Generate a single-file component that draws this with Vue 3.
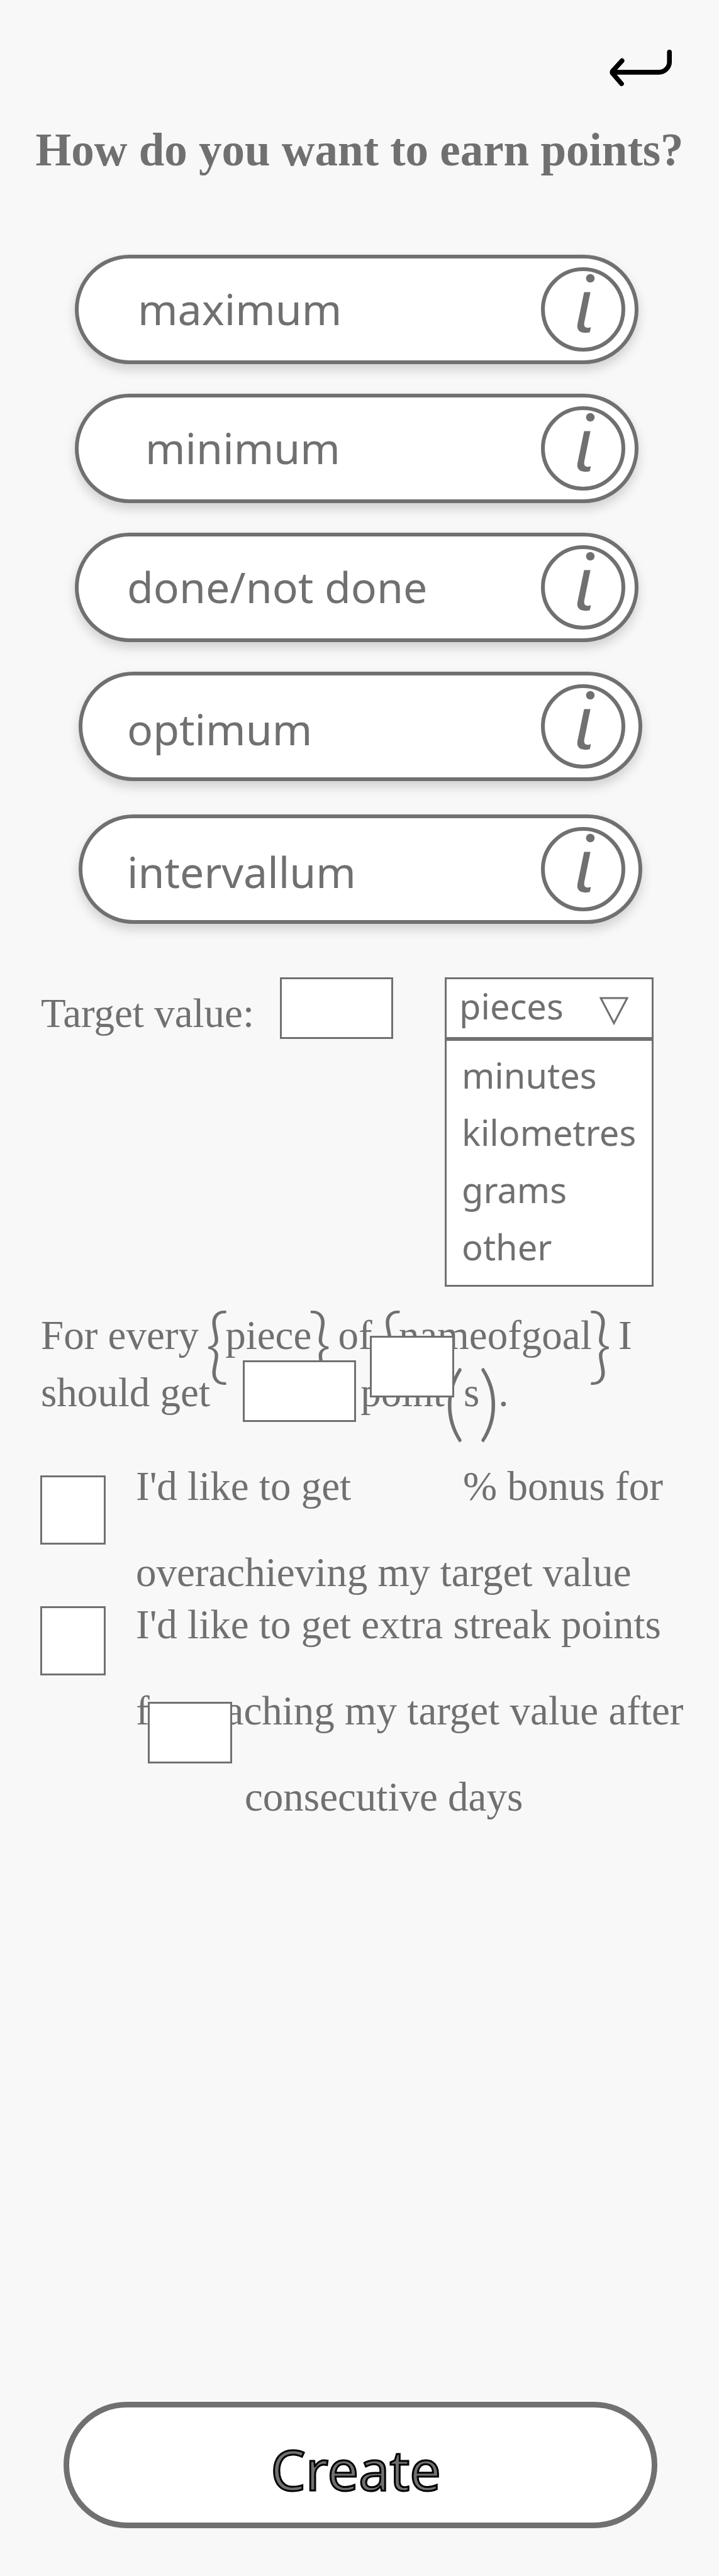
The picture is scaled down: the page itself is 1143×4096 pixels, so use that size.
<script setup>
import { ref } from 'vue'

const modes = [
  { name: 'maximum', tone: 'indent' },
  { name: 'minimum', tone: 'indent-more' },
  { name: 'done/not done', tone: '' },
  { name: 'optimum', tone: 'shifted' },
  { name: 'intervallum', tone: 'shifted' },
]
const otherUnits = ['minutes', 'kilometres', 'grams', 'other']

const target = ref('')
const unit = ref('pieces')
const points = ref('')
const bonus = ref('')
const days = ref('')
const wantsBonus = ref(false)
const wantsStreak = ref(false)
</script>

<template>
  <main class="page">
    <header class="top">
      <button class="back" type="button" aria-label="Back">
        <svg viewBox="0 0 130 76" aria-hidden="true">
          <path d="M125 5V24A22 22 0 0 1 103 47H6M26 23L6 45Q5 47 6 49L25 71" />
        </svg>
      </button>
      <h1>How do you want to earn points?</h1>
    </header>

    <section class="modes">
      <div v-for="mode in modes" :key="mode.name" class="pill" :class="mode.tone">
        <button class="mode" type="button">{{ mode.name }}</button>
        <button class="info" type="button" :aria-label="'About ' + mode.name">
          <svg viewBox="0 0 176 176" aria-hidden="true">
            <circle class="ring" cx="88" cy="88" r="84" />
            <circle cx="103" cy="23" r="9" />
            <path d="M90 52H103.300L90.300 116C89 126 95 128 104.300 125L102 135.500C88 139 74 136 76 120Z" />
          </svg>
        </button>
      </div>
    </section>

    <section class="target">
      <label for="target">Target value:</label>
      <input id="target" v-model="target" class="box" type="text" />
      <div class="units">
        <div class="head">
          <select v-model="unit" aria-label="Unit">
            <option>pieces</option>
            <option v-for="u in otherUnits" :key="u">{{ u }}</option>
          </select>
          <svg viewBox="0 0 46 46" aria-hidden="true"><path d="M2 2H44L23 42Z" /></svg>
        </div>
        <ul role="listbox" aria-label="Units">
          <li v-for="u in otherUnits" :key="u" role="option">{{ u }}</li>
        </ul>
      </div>
    </section>

    <section class="sentence">
      <span class="line">For every <span class="tall">{</span>piece<span class="tall">}</span> of <span class="tall">{</span>nameofgoal<span class="tall">}</span> I</span>
      <span class="line">should get <input v-model="points" class="box inline" type="text" aria-label="Points" />point<span class="tall paren">(</span>s<span class="tall paren">)</span>.</span>
      <input v-model="bonus" class="box small bonus" type="text" aria-label="Bonus percentage" />
    </section>

    <section class="extras">
      <div class="extra">
        <input id="want-bonus" v-model="wantsBonus" type="checkbox" />
        <label for="want-bonus">
          <span class="line">I'd like to get<span class="blank"></span>% bonus for</span>
          <span class="line">overachieving my target value</span>
        </label>
      </div>
      <div class="extra streak">
        <input id="want-streak" v-model="wantsStreak" type="checkbox" />
        <label for="want-streak">
          <span class="line">I'd like to get extra streak points</span>
          <span class="line">for reaching my target value after</span>
          <span class="line last">consecutive days</span>
        </label>
        <input v-model="days" class="box small days" type="text" aria-label="Consecutive days" />
      </div>
    </section>

    <button class="create" type="button">Create</button>
  </main>
</template>

<style>
body {
  margin: 0;
  background: #f8f8f8;
}
</style>

<style scoped>
.page {
  display: flex;
  flex-direction: column;
  box-sizing: border-box;
  min-height: 100vh;
  padding-bottom: 76px;
  overflow: hidden;
  background: #f8f8f8;
  color: #707070;
  font-family: "Liberation Serif", serif;
  font-size: 65px;
}

button,
input,
select {
  box-sizing: border-box;
  margin: 0;
  padding: 0;
  border: 0;
  border-radius: 0;
  background: none;
  color: inherit;
  font: inherit;
  appearance: none;
}

.top {
  display: flex;
  flex-direction: column;
  padding-top: 79px;
}

.back {
  align-self: flex-end;
  width: 99px;
  height: 58px;
  margin-right: 75px;
}

.back svg {
  display: block;
  width: 100%;
  height: 100%;
  fill: none;
  stroke: #000;
  stroke-width: 10;
  stroke-linecap: round;
  stroke-linejoin: round;
}

h1 {
  margin: 60px 0 124px;
  font-size: 73px;
  font-weight: bold;
  line-height: 84px;
  text-align: center;
  white-space: nowrap;
}

.modes {
  display: flex;
  flex-direction: column;
  gap: 47px;
  padding: 0 128px 0 119px;
  font-family: "Noto Sans", "Open Sans", sans-serif;
  font-size: 68px;
}

.pill {
  display: flex;
  align-items: center;
  box-sizing: border-box;
  height: 174px;
  padding-right: 15px;
  border: 6px solid #707070;
  border-radius: 87px;
  background: #fff;
  box-shadow: 0 9px 18px rgba(0, 0, 0, 0.16);
}

.mode {
  flex: 1;
  height: 100%;
  padding: 0 0 4px 77px;
  text-align: left;
}

.indent .mode {
  padding-left: 94px;
}

.indent-more .mode {
  padding-left: 106px;
}

.shifted {
  margin: 0 -6px 0 6px;
  padding-right: 21px;
}

.shifted .mode {
  padding: 6px 0 0 71px;
}

.shifted + .shifted {
  margin-top: 6px;
}

.info {
  width: 134px;
  height: 134px;
  border-radius: 50%;
}

.info svg {
  display: block;
  width: 100%;
  height: 100%;
  fill: #707070;
}

.info .ring {
  fill: none;
  stroke: #707070;
  stroke-width: 8;
}

.target {
  display: grid;
  grid-template-columns: 380px 180px 332px;
  align-items: start;
  margin-top: 85px;
  padding: 0 103px 0 65px;
}

.target label {
  line-height: 114px;
}

.box {
  width: 180px;
  height: 98px;
  border: 3px solid #707070;
  background: #fff;
  text-align: center;
}

.small {
  width: 134px;
}

.units {
  margin-left: 82px;
  width: 332px;
  font-family: "Noto Sans", "Open Sans", sans-serif;
  font-size: 56px;
}

.head {
  position: relative;
  box-sizing: border-box;
  height: 98px;
  border: 3px solid #707070;
  background: #fff;
}

.head select {
  width: 100%;
  height: 100%;
  padding: 0 0 8px 20px;
}

.head svg {
  position: absolute;
  top: 28px;
  right: 37px;
  width: 46px;
  height: 46px;
  fill: none;
  stroke: #707070;
  stroke-width: 3;
  pointer-events: none;
}

.units ul {
  margin: 0;
  padding: 9px 0 15px 24px;
  border: 3px solid #707070;
  background: #fff;
  list-style: none;
  line-height: 91px;
}

.line {
  display: block;
  white-space: nowrap;
}

.sentence {
  position: relative;
  margin-top: 32px;
  padding-left: 65px;
  line-height: 91px;
}

.tall {
  display: inline-flex;
  justify-content: center;
  width: 26px;
  height: 0;
  font-family: Lato, sans-serif;
  font-size: 132px;
  font-weight: 300;
  line-height: 0;
  vertical-align: -40px;
}

.paren {
  width: 30px;
}

.inline {
  margin: -6px 7px -10px 36px;
  vertical-align: top;
}

.bonus {
  position: absolute;
  top: 46px;
  left: 588px;
}

.extras {
  margin-top: 35px;
  padding-left: 64px;
  line-height: 137px;
}

.extra {
  position: relative;
  display: flex;
  align-items: flex-start;
  gap: 48px;
}

.extra input[type="checkbox"] {
  flex: none;
  width: 104px;
  height: 110px;
  margin-top: 51px;
  border: 3px solid #707070;
  background: #fff;
}

.extra input[type="checkbox"]:checked {
  background: #707070;
}

.streak {
  margin-top: -54px;
}

.streak input[type="checkbox"] {
  margin-top: 39px;
}

.blank {
  display: inline-block;
  width: 178px;
}

.last {
  padding-left: 173px;
}

.days {
  position: absolute;
  top: 191px;
  left: 171px;
}

.create {
  height: 201px;
  margin: auto 98px 0 101px;
  padding: 12px 15px 0 0;
  border: 9px solid #707070;
  border-radius: 101px;
  background: #fff;
  font-family: "Noto Sans", "Open Sans", sans-serif;
  font-size: 88px;
  line-height: 120px;
  -webkit-text-stroke: 3px #000;
}
</style>
